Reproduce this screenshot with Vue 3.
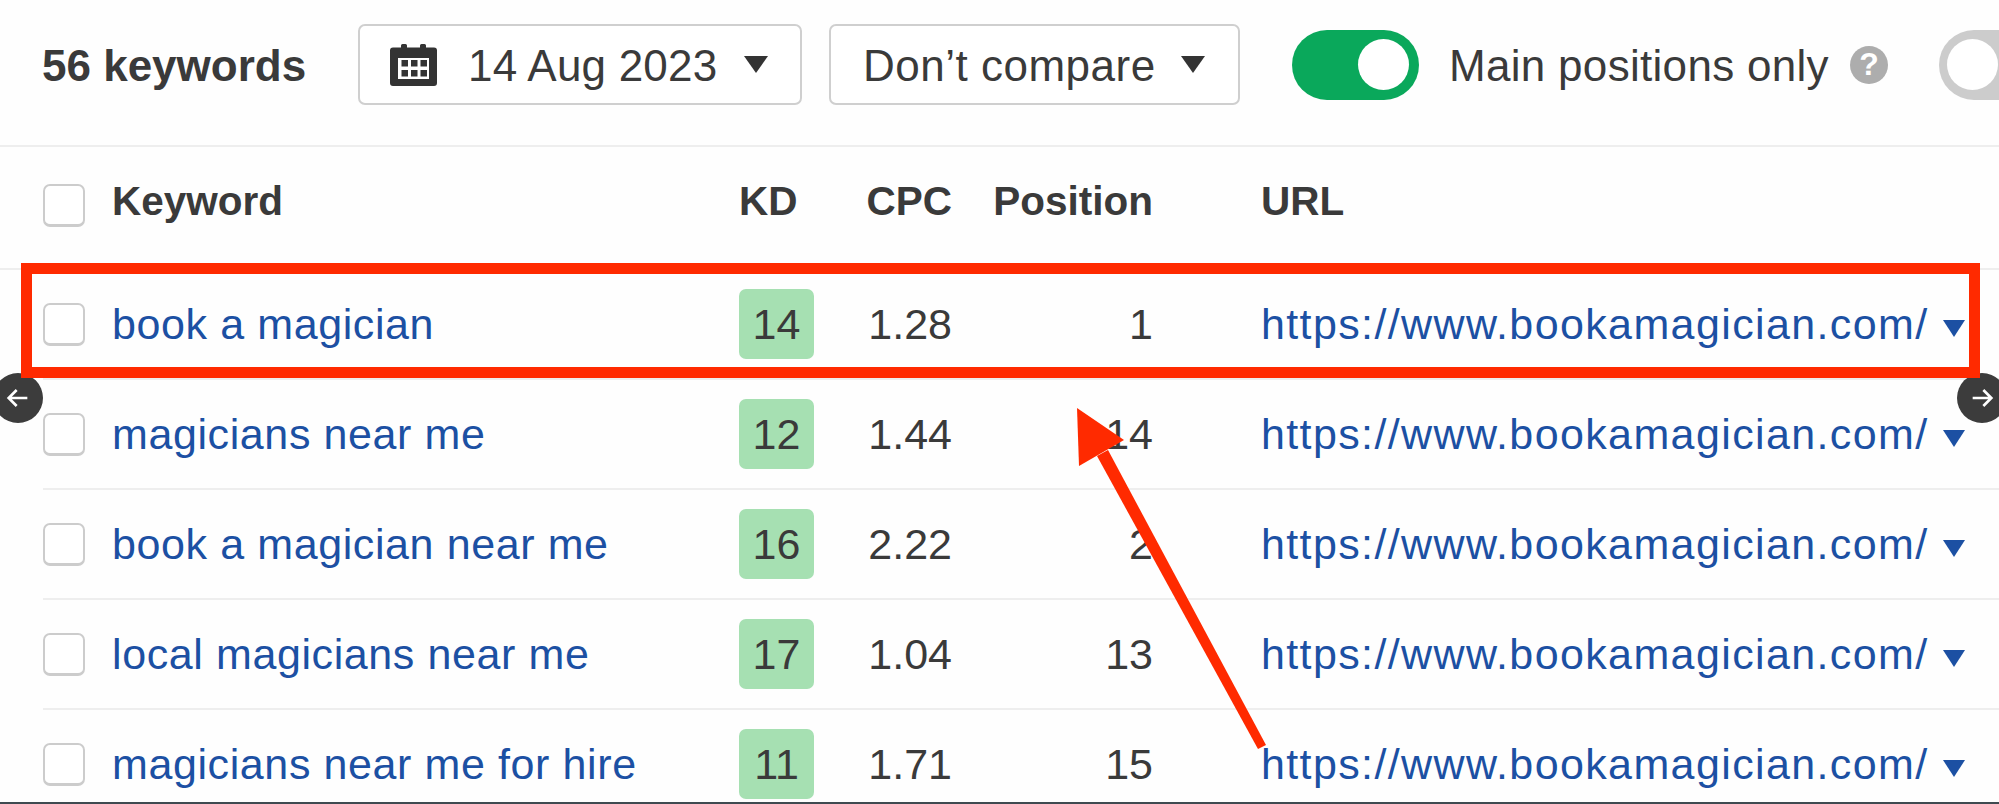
<template>
  <div class="page">
    <header class="toolbar">
      <span class="count">56 keywords</span>
      <button class="select date-select">
        <svg class="cal-icon" viewBox="0 0 47 42" aria-hidden="true">
          <path fill="#333" d="M3 3.500h8V1.500A1.500 1.500 0 0 1 12.500 0h3A1.500 1.500 0 0 1 17 1.500v2h13v-2A1.500 1.500 0 0 1 31.500 0h3A1.500 1.500 0 0 1 36 1.500v2h8a3 3 0 0 1 3 3V39a3 3 0 0 1-3 3H3a3 3 0 0 1-3-3V6.500a3 3 0 0 1 3-3z" />
          <rect x="8" y="14" width="31" height="21" fill="#fff" />
          <g fill="#333">
            <rect v-for="cell in calCells" :key="cell.x + '-' + cell.y" :x="cell.x" :y="cell.y" width="6.500" height="6.500" />
          </g>
        </svg>
        <span class="select-label">14 Aug 2023</span>
        <i class="caret"></i>
      </button>
      <button class="select compare-select">
        <span class="select-label">Don’t compare</span>
        <i class="caret"></i>
      </button>
      <span class="toggle is-on"><i class="knob"></i></span>
      <span class="toggle-label">Main positions only</span>
      <span class="help">?</span>
      <span class="toggle is-off"><i class="knob"></i></span>
    </header>

    <div class="grid head">
      <span class="check"></span>
      <span>Keyword</span>
      <span>KD</span>
      <span class="num">CPC</span>
      <span class="num">Position</span>
      <span class="url-head">URL</span>
    </div>

    <div class="grid row" v-for="row in rows" :key="row.keyword">
      <span class="check"></span>
      <a class="link keyword">{{ row.keyword }}</a>
      <span class="badge">{{ row.kd }}</span>
      <span class="num">{{ row.cpc }}</span>
      <span class="num">{{ row.position }}</span>
      <span class="url-cell">
        <a class="link url">https://www.bookamagician.com/</a>
        <i class="caret blue"></i>
      </span>
    </div>

    <footer class="edge"></footer>

    <!-- Annotation layer painted on top of the table -->
    <span class="scroll-btn left">
      <svg viewBox="0 0 24 24" aria-hidden="true"><path d="M19 12H5M11 6l-6 6 6 6" /></svg>
    </span>
    <span class="scroll-btn right">
      <svg viewBox="0 0 24 24" aria-hidden="true"><path d="M5 12h14M13 6l6 6-6 6" /></svg>
    </span>
    <div class="highlight"></div>
    <svg class="arrow" viewBox="0 0 1999 804" aria-hidden="true">
      <path d="M1097 456L1258 749L1266 745L1108 450Z" fill="#ff2a00" />
      <path d="M1077 408L1124 440L1079 466Z" fill="#ff2a00" />
    </svg>
  </div>
</template>

<script setup>
const rows = [
  { keyword: "book a magician", kd: 14, cpc: "1.28", position: 1 },
  { keyword: "magicians near me", kd: 12, cpc: "1.44", position: 14 },
  { keyword: "book a magician near me", kd: 16, cpc: "2.22", position: 2 },
  { keyword: "local magicians near me", kd: 17, cpc: "1.04", position: 13 },
  { keyword: "magicians near me for hire", kd: 11, cpc: "1.71", position: 15 },
];

// 3 x 2 day squares inside the calendar icon
const calCells = [11.500, 21, 30.500].flatMap((x) => [16, 26].map((y) => ({ x, y })));
</script>

<style>
html,
body {
  margin: 0;
  overflow: hidden;
  background: #fff;
}
</style>

<style scoped>
.page {
  position: relative;
  width: 1999px;
  height: 804px;
  overflow: hidden;
  background: #fefefe;
  color: #3a3a3a;
  font-family: "Liberation Sans", Arial, sans-serif;
  font-size: 43px;
}

/* ─── Toolbar ─── */
.toolbar {
  display: flex;
  align-items: center;
  box-sizing: border-box;
  height: 147px;
  padding: 0 0 16px 42px;
  border-bottom: 2px solid #eeeeee;
  font-size: 44px;
  white-space: nowrap;
}

.toolbar > * {
  flex: none;
}

.count {
  width: 316px;
  padding-top: 2px;
  font-weight: 700;
}

.select {
  display: flex;
  align-items: center;
  box-sizing: border-box;
  height: 81px;
  padding: 0;
  border: 2px solid #cfcfcf;
  border-radius: 7px;
  background: #fff;
  color: inherit;
  font: inherit;
}

.date-select {
  width: 444px;
  padding-left: 30px;
}

.compare-select {
  width: 411px;
  margin-left: 27px;
  padding-left: 32px;
}

.cal-icon {
  width: 47px;
  height: 42px;
  margin-right: 31px;
}

.select-label {
  margin-right: 27px;
  padding-top: 2px;
  letter-spacing: 0.2px;
}

.compare-select .select-label {
  margin-right: 25px;
  letter-spacing: 0.5px;
}

.caret {
  display: block;
  width: 0;
  height: 0;
  border-left: 12.5px solid transparent;
  border-right: 12.5px solid transparent;
  border-top: 17px solid #333;
}

.toggle {
  display: flex;
  align-items: center;
  box-sizing: border-box;
  width: 127px;
  height: 70px;
  border-radius: 35px;
}

.toggle .knob {
  display: block;
  width: 51px;
  height: 51px;
  border-radius: 50%;
  background: #fff;
}

.is-on {
  margin-left: 52px;
  padding-left: 66px;
  background: #0aa85b;
}

.is-off {
  margin-left: 51px;
  padding-left: 8px;
  background: #cccccc;
}

.toggle-label {
  margin-left: 30px;
  padding-top: 2px;
  letter-spacing: 0.3px;
}

.help {
  display: flex;
  align-items: center;
  justify-content: center;
  width: 38px;
  height: 38px;
  margin-left: 21px;
  border-radius: 50%;
  background: #adadad;
  color: #fff;
  font-size: 32px;
  font-weight: 700;
}

/* ─── Table ─── */
.grid {
  display: grid;
  grid-template-columns: 69px 627px 75px 138px 201px 1fr;
  align-items: center;
  white-space: nowrap;
}

.head {
  height: 109px;
  padding: 0 0 12px 43px;
  border-bottom: 2px solid #eeeeee;
  font-size: 40.5px;
  font-weight: 700;
}

.head .check {
  margin-top: 8px;
}

.row {
  box-sizing: border-box;
  height: 110px;
  margin-left: 43px;
  border-bottom: 2px solid #eeeeee;
}

.check {
  display: block;
  box-sizing: border-box;
  width: 42px;
  height: 43px;
  border: 2px solid #cccccc;
  border-bottom-width: 3px;
  border-radius: 7px;
  background: #fff;
}

.link {
  color: #1c50a3;
}

.keyword {
  letter-spacing: 0.6px;
}

.badge {
  display: flex;
  align-items: center;
  justify-content: center;
  height: 70px;
  border-radius: 7px;
  background: #a6e0b2;
}

.num {
  text-align: right;
}

.url-head {
  padding-left: 108px;
}

.url-cell {
  display: flex;
  align-items: center;
  padding-left: 108px;
}

.url {
  width: 682px;
  flex: none;
  letter-spacing: 1.38px;
}

.caret.blue {
  border-left-width: 11.5px;
  border-right-width: 11.5px;
  border-top-width: 17px;
  border-top-color: #1c50a3;
  margin-top: 9px;
}

.edge {
  position: absolute;
  left: 0;
  right: 0;
  bottom: 0;
  height: 2px;
  background: #3f4a50;
}

/* ─── Annotations ─── */
.scroll-btn {
  position: absolute;
  top: 373px;
  display: flex;
  align-items: center;
  justify-content: center;
  width: 50px;
  height: 50px;
  border-radius: 50%;
  background: #3c3c3c;
}

.scroll-btn.left {
  left: -7px;
}

.scroll-btn.right {
  left: 1957px;
}

.scroll-btn svg {
  width: 32px;
  height: 32px;
  fill: none;
  stroke: #fff;
  stroke-width: 2;
}

.highlight {
  position: absolute;
  left: 21px;
  top: 263px;
  box-sizing: border-box;
  width: 1959px;
  height: 115px;
  border: 11px solid #ff2a00;
}

.arrow {
  position: absolute;
  inset: 0;
  width: 1999px;
  height: 804px;
}
</style>
